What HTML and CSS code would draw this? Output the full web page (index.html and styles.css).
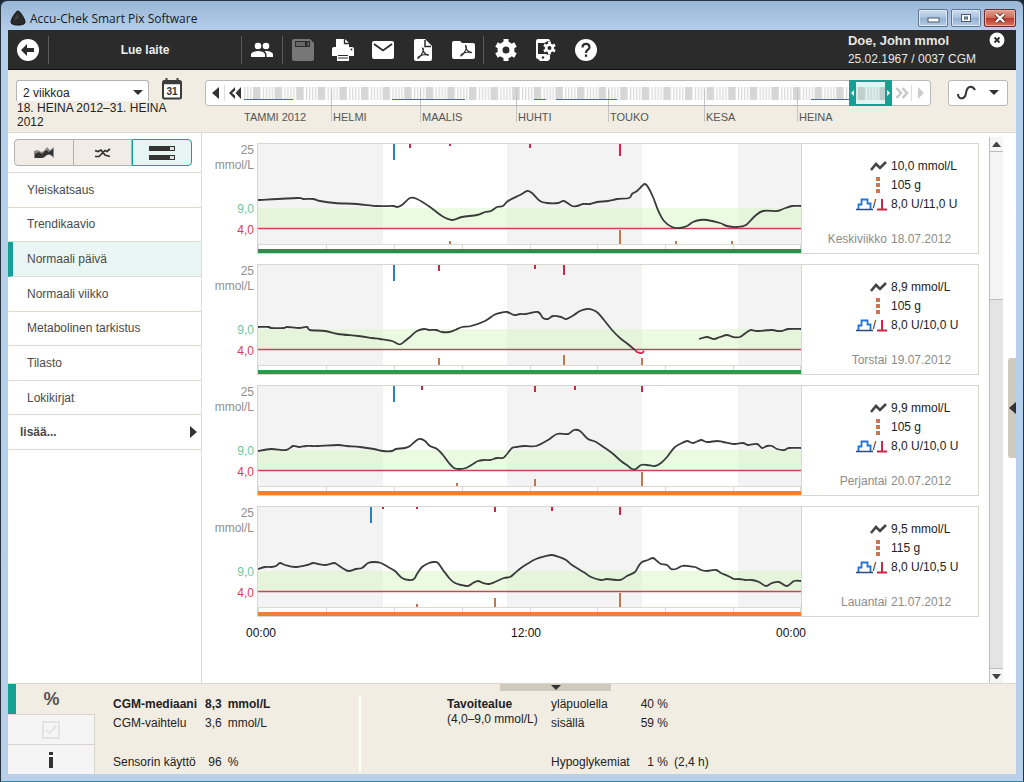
FILE: index.html
```html
<!DOCTYPE html>
<html lang="fi">
<head>
    <meta charset="UTF-8">
    <meta name="viewport" content="width=device-width, initial-scale=1.0">
    <title>Accu-Chek Smart Pix Software</title>
    <link rel="stylesheet" href="styles.css">
</head>
<body>

<div class="window">
    <header class="titlebar">
        <svg class="app-icon" width="16" height="16" viewBox="0 0 16 16"><path d="M8 1C10 1 15 9 15 12C15 14 13 15 8 15C3 15 1 14 1 12C1 9 6 1 8 1Z" fill="#2b2b2b" stroke="#111"/><path d="M7 4L4 10L9 8Z" fill="#444"/></svg>
        <h1>Accu-Chek Smart Pix Software</h1>
        <div class="window-buttons">
            <button aria-label="Pienennä"><svg width="13" height="10"><rect x="1" y="5" width="11" height="4" fill="#fff" stroke="#4b5a6e"/></svg></button>
            <button aria-label="Suurenna"><svg width="13" height="10"><rect x="1.5" y="1.5" width="9" height="7" fill="#fff" stroke="#4b5a6e"/><rect x="4.5" y="4" width="3" height="2" fill="#9db3cf" stroke="#4b5a6e"/></svg></button>
            <button class="win-close" aria-label="Sulje"><svg width="14" height="10"><path d="M3 1L11 9M11 1L3 9" stroke="#5c2a28" stroke-width="4"/><path d="M3 1L11 9M11 1L3 9" stroke="#fff" stroke-width="2.4"/></svg></button>
        </div>
    </header>

    <div class="content">
        <nav class="toolbar">
            <button class="tool" aria-label="Takaisin"><svg width="22" height="22" viewBox="0 0 22 22"><circle cx="11" cy="11" r="11" fill="#fff"/><path d="M4 11L10 5V9H17V13H10V17Z" fill="#2b2b2b"/></svg></button>
            <span class="sep"></span>
            <button class="read-device">Lue laite</button>
            <span class="sep"></span>
            <button class="tool" aria-label="Potilaat"><svg width="24" height="24" viewBox="0 0 24 24" fill="#fff"><circle cx="8" cy="8" r="3.3"/><circle cx="16" cy="8" r="3.3"/><path d="M1 19V16.5C1 14 5.500 13 8 13S15 14 15 16.500V19ZM16.500 19V16.500C16.500 15 15.800 14 14.600 13.200C18 12.700 23 14 23 16.500V19Z"/></svg></button>
            <span class="sep"></span>
            <button class="tool" aria-label="Tallenna" disabled><svg width="22" height="22" viewBox="0 0 22 22"><path d="M2 0H18L22 4V20Q22 22 20 22H2Q0 22 0 20V2Q0 0 2 0Z" fill="#777"/><path d="M3 2H18V8H3Z" fill="#2b2b2b"/><path d="M4 3H13V7H4ZM15.500 3H17V7H15.500Z" fill="#666"/></svg></button>
            <button class="tool" aria-label="Tulosta"><svg width="24" height="24" viewBox="0 0 24 24"><path d="M5 1H14L18 5V9H21Q23 9 23 11V18H18V23H6V18H1V11Q1 9 3 9H5Z" fill="#fff"/><path d="M13.500 1V5.500H18" fill="none" stroke="#2b2b2b" stroke-width="1.300"/><path d="M7 17.500H17M7 20H17" stroke="#2b2b2b"/><circle cx="20.500" cy="11.500" r="1" fill="#2b2b2b"/></svg></button>
            <button class="tool" aria-label="Sähköposti"><svg width="22" height="20" viewBox="0 0 22 20"><rect y="1" width="22" height="18" rx="2" fill="#fff"/><path d="M2 4L11 10.500L20 4" fill="none" stroke="#2b2b2b" stroke-width="1.800"/></svg></button>
            <button class="tool" aria-label="PDF"><svg width="20" height="22" viewBox="0 0 20 22"><path d="M3 0H12L19 7V20Q19 22 17 22H3Q1 22 1 20V2Q1 0 3 0Z" fill="#fff"/><path d="M12 1V7.500H18" fill="none" stroke="#2b2b2b" stroke-width="1.500"/><path d="M9.500 9C12 9 9 17 5 19.500C4 18 9 15 15 15.500C17 17.500 10 15.500 9.500 9Z" fill="none" stroke="#2b2b2b" stroke-width="1.100"/></svg></button>
            <button class="tool" aria-label="PDF-kansio"><svg width="23" height="20" viewBox="0 0 23 20"><path d="M2 1H8L10 3H21Q23 3 23 5V17Q23 19 21 19H2Q0 19 0 17V3Q0 1 2 1Z" fill="#fff"/><path d="M13.500 5.500C16 6 13 13.500 9 16C8 14.500 13 11.500 19 12C21 14 14 12 13.500 5.500Z" fill="none" stroke="#2b2b2b" stroke-width="1.100"/></svg></button>
            <span class="sep wide"></span>
            <button class="tool" aria-label="Asetukset"><svg width="22" height="22" viewBox="0 0 22 22"><circle cx="11" cy="11" r="6" fill="none" stroke="#fff" stroke-width="5"/><path d="M11 0V4M11 18V22M1.500 5.500L5 7.500M17 14.500L20.500 16.500M1.500 16.500L5 14.500M17 7.500L20.500 5.500" stroke="#fff" stroke-width="5"/></svg></button>
            <button class="tool" aria-label="Laitteen asetukset"><svg width="22" height="22" viewBox="0 0 22 22"><path d="M3 0H13Q15 0 15 2V20L13 22H5L3 20Q1 20 1 18V2Q1 0 3 0Z" fill="#fff"/><path d="M3 4H13V15H3Z" fill="#2b2b2b"/><circle cx="14.500" cy="9" r="7" fill="#2b2b2b"/><circle cx="14.500" cy="9" r="3.300" fill="none" stroke="#fff" stroke-width="2.600"/><path d="M14.500 2.500V5M14.500 13V15.500M9 5.800L11 7M18 11L20 12.200M9 12.200L11 11M18 7L20 5.800" stroke="#fff" stroke-width="2.800"/><circle cx="8" cy="18.500" r="1.200" fill="#2b2b2b"/></svg></button>
            <button class="tool" aria-label="Ohje"><svg width="22" height="22" viewBox="0 0 22 22"><circle cx="11" cy="11" r="11" fill="#fff"/><path d="M7.500 8.500Q7.500 4.800 11 4.800T14.500 8.200Q14.500 9.800 12.500 11Q11 12 11 14" fill="none" stroke="#2b2b2b" stroke-width="2.200"/><rect x="9.900" y="15.500" width="2.300" height="2.300" fill="#2b2b2b"/></svg></button>
            <div class="patient">
                <strong>Doe, John mmol</strong>
                <span>25.02.1967 / 0037 CGM</span>
            </div>
            <button class="patient-close" aria-label="Sulje potilas"><svg width="16" height="16"><circle cx="8" cy="8" r="7.500" fill="#fff"/><path d="M5.500 5.500L10.500 10.500M10.500 5.500L5.500 10.500" stroke="#2b2b2b" stroke-width="1.800"/></svg></button>
        </nav>

        <section class="filterbar">
            <div class="period">
                <div class="period-row">
                    <div class="select-wrap">
                        <select aria-label="Ajanjakso"><option>2 viikkoa</option><option>4 viikkoa</option></select>
                    </div>
                    <button class="plain" aria-label="Kalenteri"><svg width="20" height="22" viewBox="0 0 20 22"><path d="M4.500 0V4M15.500 0V4" stroke="#3c3c3c" stroke-width="2"/><rect x="1" y="3" width="18" height="17.500" rx="1.500" fill="#fff" stroke="#3c3c3c" stroke-width="2"/><path d="M1 4.500H19" stroke="#3c3c3c" stroke-width="3.500"/><text x="10" y="17" class="cal-text">31</text></svg></button>
                </div>
                <div class="period-range"><p>18. HEINA 2012–31. HEINA 2012</p></div>
            </div>

            <div class="timeline">
                <div class="timeline-bar">
                    <button class="plain step" aria-label="Edellinen"><svg width="8" height="12"><path d="M8 0V12L1 6Z" fill="#333"/></svg></button>
                    <button class="plain jump" aria-label="Alkuun"><svg width="14" height="12"><path d="M7 0V3.500L4 6L7 8.500V12L1 6ZM13 0V12L7.500 6Z" fill="#333"/></svg></button>
                    <div class="strip">
                        <svg width="100%" height="24" viewBox="0 0 648 24" preserveAspectRatio="none">
                            <defs>
                                <pattern id="days" x="9" width="21.6" height="24" patternUnits="userSpaceOnUse">
                                    <rect width="7.500" height="13" y="6" fill="#d6d6d6"/>
                                    <path d="M10.500 6V19M13.500 6V19M16.500 6V19M19.500 6V19" stroke="#cfcfcf"/>
                                </pattern>
                            </defs>
                            <rect width="648" height="24" fill="url(#days)"/>
                            <path d="M87.500 8V24M176.500 8V24M272.500 8V24M364.500 8V24M460.500 8V24M553.500 8V24" stroke="#c4c4c4"/>
                            <path d="M0 18.500H49M148 18.500H221M290 18.500H302M312 18.500H373M567 18.500H605" stroke="#4a6d9c"/>
                        </svg>
                        <div class="range"><i></i><i></i></div>
                    </div>
                    <button class="plain jump" aria-label="Loppuun"><svg width="14" height="12"><path d="M1.500 1L6 6L1.500 11M7.500 1L12 6L7.500 11" fill="none" stroke="#c8c8c8" stroke-width="2.500"/></svg></button>
                    <button class="plain step last" aria-label="Seuraava"><svg width="8" height="12"><path d="M1 0V12L7 6Z" fill="#ccc"/></svg></button>
                </div>
                <div class="months">
                    <span>TAMMI 2012</span><span>HELMI</span><span>MAALIS</span><span>HUHTI</span><span>TOUKO</span><span>KESA</span><span>HEINA</span>
                </div>
            </div>

            <button class="graph-type" aria-label="Kaavion tyyppi">
                <svg width="20" height="16"><path d="M1 9C1 15 8 15 9 8S15 0 18 5" fill="none" stroke="#333" stroke-width="2"/></svg>
                <svg width="10" height="6"><path d="M0 0H10L5 5Z" fill="#333"/></svg>
            </button>
        </section>

        <main class="main">
            <aside class="sidebar">
                <div class="view-tabs">
                    <button aria-label="Trendi"><svg width="20" height="14"><path d="M0 5L4 4L7 6L10 5L13 1L16 4L20 1V12L16 9L13 9L10 12H0Z" fill="#8a8a8a"/><path d="M1 8L5 6L8 8L12 4L15 6L19 3V10L15 8L11 10L8 12H1Z" fill="#333"/></svg></button>
                    <button aria-label="Käyrä"><svg width="16" height="12"><path d="M0 9.500H4L10 3.500L12 4.500L15 2M0 3.500L3 4.500L6 3L10 8L15 9.500" fill="none" stroke="#333" stroke-width="1.700"/></svg></button>
                    <button class="active" aria-label="Päivät"><svg width="26" height="14"><rect y="0" width="26" height="5" fill="#333"/><rect y="9" width="26" height="5" fill="#333"/><path d="M21 1H25V4H21ZM21 10H25V13H21Z" fill="#ddd"/></svg></button>
                </div>
                <nav class="menu">
                    <a href="#">Yleiskatsaus</a>
                    <a href="#">Trendikaavio</a>
                    <a href="#" class="active">Normaali päivä</a>
                    <a href="#">Normaali viikko</a>
                    <a href="#">Metabolinen tarkistus</a>
                    <a href="#">Tilasto</a>
                    <a href="#">Lokikirjat</a>
                    <a href="#" class="more">lisää... <svg width="7" height="12"><path d="M0 0V12L7 6Z" fill="#333"/></svg></a>
                </nav>
            </aside>

            <section class="days">
                <div id="dayList"></div>
                <div class="hours"><span>00:00</span><span>12:00</span><span>00:00</span></div>
            </section>

            <div class="scrollbar">
                <button aria-label="Ylös"><svg width="9" height="5"><path d="M0 5H9L5 0H4Z" fill="#444"/></svg></button>
                <div class="thumb"></div>
                <div class="track"></div>
                <button aria-label="Alas"><svg width="9" height="5"><path d="M0 0H9L5 5H4Z" fill="#444"/></svg></button>
            </div>
            <button class="side-handle" aria-label="Avaa paneeli"><svg width="7" height="12"><path d="M7 0V12L0 6Z" fill="#333"/></svg></button>
        </main>

        <footer class="footer">
            <div class="footer-tabs">
                <button class="active">%</button>
                <button aria-label="Valinnat" disabled><svg width="18" height="18"><rect x="1" y="1" width="16" height="16" fill="none" stroke="#e3e3e3" stroke-width="2"/><path d="M4 9L8 12L14 5" fill="none" stroke="#e3e3e3" stroke-width="2"/></svg></button>
                <button aria-label="Tiedot"><svg width="6" height="16"><rect x="1" width="4" height="3" fill="#333"/><rect x="1" y="5" width="4" height="11" fill="#333"/></svg></button>
            </div>
            <table class="stats cgm">
                <tr class="bold"><th>CGM-mediaani</th><td class="num">8,3</td><td>mmol/L</td></tr>
                <tr><th>CGM-vaihtelu</th><td class="num">3,6</td><td>mmol/L</td></tr>
                <tr class="last"><th>Sensorin käyttö</th><td class="num">96</td><td>%</td></tr>
            </table>
            <div class="target"><strong>Tavoitealue</strong><span>(4,0–9,0 mmol/L)</span></div>
            <table class="stats">
                <tr><th>yläpuolella</th><td class="num">40 %</td><td></td></tr>
                <tr><th>sisällä</th><td class="num">59 %</td><td></td></tr>
                <tr class="last"><th>Hypoglykemiat</th><td class="num">1 %</td><td>(2,4 h)</td></tr>
            </table>
            <button class="footer-handle" aria-label="Piilota paneeli"><svg width="10" height="5"><path d="M0 0H10L5 5Z" fill="#333"/></svg></button>
        </footer>
    </div>
</div>

<script>
    // basal, bolus and meals are [x, height] marks; curves are lists of x,y points
    const days = [
        {
            name: 'Keskiviikko', date: '18.07.2012', mean: '10,0', carbs: '105', insulin: '8,0 U/11,0 U', status: '#2a8f4c',
            basal: [[136, 16]],
            bolus: [[152, 4], [192, 2], [272, 4], [362, 12]],
            meals: [[192, 3], [362, 14], [418, 3], [474, 3]],
            curves: ['0,56 39,54 45,55 55,55 62,57 77,59 99,60 119,62 135,62 139,63 144,61 152,54 159,55 172,63 184,72 194,76 204,73 219,71 227,68 233,67 239,63 245,62 250,57 262,51 269,47 274,49 282,57 289,59 300,59 306,57 314,62 319,62 325,60 332,60 339,58 350,57 359,55 371,54 374,50 379,47 384,42 387,40 390,43 395,53 400,66 406,77 414,83 422,84 429,82 435,78 442,76 449,76 462,79 469,82 479,83 488,81 497,72 505,67 519,67 525,65 534,62 543,62']
        },
        {
            name: 'Torstai', date: '19.07.2012', mean: '8,9', carbs: '105', insulin: '8,0 U/10,0 U', status: '#2a9a4c',
            basal: [[136, 16]],
            bolus: [[181, 6], [277, 4], [306, 10]],
            meals: [[181, 7], [306, 10], [384, 7]],
            curves: ['0,62 11,62 13,63 26,63 29,62 41,63 49,62 52,65 67,66 80,69 100,71 114,73 122,74 134,76 140,79 143,79 147,76 152,72 159,66 166,64 171,65 178,65 184,67 191,67 197,65 204,62 213,61 227,56 236,50 242,48 249,47 256,50 262,49 268,49 280,47 285,53 290,54 295,51 303,52 308,54 316,50 322,46 329,44 335,45 340,48 346,55 354,65 362,73 371,80 377,85',
                '441,74 449,72 456,74 462,72 469,70 475,72 482,72 489,67 493,65 499,66 514,65 519,66 524,66 530,64 543,64'],
            low: '377,85 379,87 382,88 384,88 386,86'
        },
        {
            name: 'Perjantai', date: '20.07.2012', mean: '9,9', carbs: '105', insulin: '8,0 U/10,0 U', status: '#f08030',
            basal: [[136, 16]],
            bolus: [[164, 4], [277, 6], [317, 4], [384, 6]],
            meals: [[199, 3], [277, 7], [384, 14]],
            curves: ['0,65 13,63 28,64 35,60 41,61 48,60 54,60 60,60 80,59 89,60 102,61 116,63 125,65 134,65 138,63 147,62 152,60 159,54 163,53 167,55 172,60 179,63 185,69 191,77 196,82 201,83 208,82 215,78 220,75 226,74 232,74 239,72 245,72 249,68 254,62 259,61 266,60 278,60 290,54 299,48 310,48 316,44 322,45 330,53 338,56 347,62 354,67 363,75 370,80 374,83 378,83 383,79 389,79 397,80 403,77 409,71 416,62 422,58 429,55 435,57 443,54 449,56 459,55 465,56 476,58 485,57 490,59 499,58 504,62 509,60 514,60 519,63 526,64 531,62 543,62']
        },
        {
            name: 'Lauantai', date: '21.07.2012', mean: '9,5', carbs: '115', insulin: '8,0 U/10,5 U', status: '#f08030',
            basal: [[113, 16]],
            bolus: [[125, 2], [159, 2], [237, 5], [294, 4], [362, 8]],
            meals: [[159, 3], [237, 9], [362, 14]],
            curves: ['0,62 7,60 13,60 18,59 22,56 27,58 37,60 49,58 55,56 60,57 68,58 76,56 80,58 86,62 91,64 98,62 104,61 110,56 116,55 123,56 130,60 137,64 144,71 151,73 156,72 159,67 164,60 171,56 176,55 180,56 185,63 192,72 197,76 203,78 210,79 215,76 220,74 225,76 231,77 237,75 246,71 252,70 257,66 263,61 269,57 278,52 288,49 294,48 301,50 308,53 314,58 322,63 327,66 333,70 343,73 349,72 362,73 369,69 377,65 380,60 384,55 390,53 395,51 399,54 403,57 409,58 413,62 418,62 424,59 430,59 437,60 443,63 449,64 458,63 463,66 470,69 476,72 481,72 487,73 494,73 501,75 508,79 514,76 521,75 529,79 536,74 543,74']
        }
    ];

    const topMark = color => ([x, h]) => `<rect x="${x - 1}" y="0" width="2" height="${h}" fill="${color}"/>`;
    const mealMark = ([x, h]) => `<rect x="${x - 1}" y="${100 - h}" width="2" height="${h}" fill="#c07850"/>`;

    // Catmull-Rom spline through the points
    function smooth(points) {
        const p = points.split(' ').map(s => s.split(',').map(Number));
        let d = `M${p[0]}`;
        for (let i = 0; i < p.length - 1; i++) {
            const [a, b, c, e] = [p[i - 1] || p[i], p[i], p[i + 1], p[i + 2] || p[i + 1]];
            d += `C${b[0] + (c[0] - a[0]) / 6},${b[1] + (c[1] - a[1]) / 6} ${c[0] - (e[0] - b[0]) / 6},${c[1] - (e[1] - b[1]) / 6} ${c}`;
        }
        return d;
    }

    function chart(day) {
        return `<svg class="chart" viewBox="0 0 543 109" preserveAspectRatio="none">
            <path d="M0 0H125V100H0ZM249 0H384V100H249ZM480 0H543V100H480Z" fill="#f3f3f3"/>
            <rect y="64" width="543" height="20" fill="#d8f8c4" fill-opacity=".5"/>
            <path d="M0 100.5H543" stroke="#e0d8cc"/>
            <path d="M.5 101V105M68.5 101V105M136.5 101V105M204.5 101V105M272.5 101V105M339.5 101V105M407.5 101V105M475.5 101V105M542.5 101V105" stroke="#d8d8d8"/>
            <rect y="105" width="543" height="4" fill="${day.status}"/>
            ${day.basal.map(topMark('#2a7fc8')).join('')}
            ${day.bolus.map(topMark('#cf2549')).join('')}
            ${day.meals.map(mealMark).join('')}
            <path d="M0 84.5H543" stroke="#d0405e" stroke-width="1.3"/>
            ${day.curves.map(c => `<path class="curve" d="${smooth(c)}"/>`).join('')}
            ${day.low ? `<path class="curve low" d="${smooth(day.low)}"/>` : ''}
        </svg>`;
    }

    document.getElementById('dayList').innerHTML = days.map(day => `
        <article class="day">
            <div class="scale"><span>25<br>mmol/L</span><span class="high">9,0</span><span class="low">4,0</span></div>
            <div class="card">
                ${chart(day)}
                <div class="info">
                    <span><svg width="17" height="12"><path d="M1 10L6 4L10 8L16 2" fill="none" stroke="#444" stroke-width="2.6"/></svg></span><span>${day.mean} mmol/L</span>
                    <span class="meal"><svg width="4" height="16"><path d="M0 0H4V4H0ZM0 6H4V10H0ZM0 12H4V16H0Z" fill="#c87850"/></svg></span><span>${day.carbs} g</span>
                    <span><svg width="17" height="14"><path d="M2.500 12V7.500H5.500V2.500H11.500V6.500H14.500V12" fill="none" stroke="#1f74d8" stroke-width="1.800"/><path d="M0 12.500H17" stroke="#2c4a78" stroke-width="1.500"/></svg>/<svg class="bolus" width="10" height="14"><path d="M5 2V12M0 12.500H10" stroke="#cf2549" stroke-width="2"/></svg></span><span>${day.insulin}</span>
                    <span class="date">${day.name}</span><span class="date">${day.date}</span>
                </div>
            </div>
        </article>`).join('');
</script>

</body>
</html>
```
FILE: styles.css
```css
* {
    box-sizing: border-box;
}
body {
    margin: 0;
    font-family: "Liberation Sans", Arial, sans-serif;
    font-size: 12px;
    color: #222;
    background: #1b2a38;
}
button, select {
    font: inherit;
    color: inherit;
}
button {
    display: flex;
    align-items: center;
    justify-content: center;
    margin: 0;
    padding: 0;
    border: none;
    background: none;
    cursor: pointer;
}
svg {
    display: block;
    flex-shrink: 0;
}

/* Window frame */
.window {
    display: flex;
    flex-direction: column;
    min-height: 100vh;
    padding: 0 7px 7px;
    border: 1px solid #27323f;
    border-bottom-color: #1c90a8;
    border-radius: 7px 7px 0 0;
    background: linear-gradient(#9ab6d6, #b3cfeb 30px, #b9d0ea);
}
.titlebar {
    display: flex;
    align-items: center;
    height: 29px;
    padding: 5px 0 0 2px;
}
.titlebar h1 {
    flex: 1;
    margin: 0 0 0 4px;
    font: 12px "Open Sans", "Noto Sans", sans-serif;
    color: #151c26;
}
.window-buttons {
    display: flex;
    gap: 3px;
}
.window-buttons button {
    width: 30px;
    height: 18px;
    border: 1px solid #5f7590;
    border-radius: 2px;
    background: linear-gradient(#cfdff0, #a6c0dd 50%, #93b0d0 50%, #b4cce6);
    box-shadow: inset 0 0 0 1px #dce9f6;
}
.window-buttons .win-close {
    width: 32px;
    border-color: #6b2a2c;
    background: linear-gradient(#e3a18f, #cf6a57 50%, #b8372a 50%, #d5755e);
    box-shadow: inset 0 0 0 1px #e8b0a2;
}
.content {
    display: flex;
    flex: 1;
    flex-direction: column;
    background: #fff;
}

/* Toolbar */
.toolbar {
    display: flex;
    align-items: center;
    height: 40px;
    border-bottom: 1px solid #111;
    background: #2b2b2b;
    color: #fff;
}
.tool {
    width: 40px;
    height: 38px;
}
.sep {
    width: 1px;
    height: 28px;
    background: #5a5a5a;
}
.sep.wide {
    margin-right: 2px;
}
.read-device {
    width: 192px;
    font-weight: bold;
    color: #eee;
}
.patient {
    display: flex;
    flex-direction: column;
    margin-left: auto;
    color: #e6e6e6;
    line-height: 18px;
}
.patient strong {
    font-size: 13px;
}
.patient-close {
    align-self: flex-start;
    margin: 2px 11px 0 13px;
}

/* Period and timeline */
.filterbar {
    display: flex;
    align-items: flex-start;
    height: 63px;
    padding: 10px 8px 0;
    border-bottom: 1px solid #dfdacf;
    background: #f2ede3;
}
.plain {
    flex-shrink: 0;
}
.period {
    width: 189px;
}
.period-row {
    display: flex;
    align-items: flex-start;
    gap: 13px;
    height: 21px;
}
.period-row .plain {
    margin-top: -2px;
}
.select-wrap {
    position: relative;
    width: 133px;
}
.select-wrap::after {
    content: "";
    position: absolute;
    top: 10px;
    right: 6px;
    border: 5px solid transparent;
    border-top-color: #333;
    pointer-events: none;
}
.select-wrap select {
    width: 100%;
    height: 21px;
    padding: 4px 6px 0;
    border: 1px solid #b5b5b5;
    border-bottom: none;
    border-radius: 3px 3px 0 0;
    background: #fff;
    appearance: none;
}
.cal-text {
    font-size: 10px;
    font-weight: bold;
    text-anchor: middle;
    fill: #333;
}
.period-range {
    height: 23px;
    margin-top: 2px;
    overflow: hidden;
    line-height: 14px;
}
.period-range p {
    width: 160px;
    margin: -2px 0 0 1px;
}
.timeline {
    flex: 1;
}
.timeline-bar {
    display: flex;
    align-items: center;
    height: 26px;
    border: 1px solid #b9b9b9;
    border-radius: 3px;
    background: #fff;
}
.step {
    width: 19px;
    height: 16px;
    border-right: 1px solid #ddd;
}
.step.last {
    border-right: none;
    border-left: 1px solid #ddd;
}
.jump {
    width: 19px;
}
.strip {
    position: relative;
    flex: 1;
}
.range {
    position: absolute;
    top: -1px;
    right: 0;
    display: flex;
    align-items: center;
    justify-content: space-between;
    width: 43px;
    height: 26px;
    border: 2px solid #14a095;
    border-width: 2px 7px;
    background: rgba(20, 160, 149, 0.12);
}
.range i {
    margin-left: -5px;
    border: 3px solid transparent;
    border-right: 3px solid #fff;
    border-left: none;
}
.range i + i {
    margin: 0 -5px 0 0;
    border-right: none;
    border-left: 3px solid #fff;
}
.months {
    display: grid;
    grid-template-columns: 87fr 89fr 96fr 92fr 96fr 93fr 95fr;
    margin: 0 39px;
    line-height: 16px;
    font-size: 11px;
    color: #555;
}
.months span {
    height: 16px;
    padding: 3px 0 0 1px;
    border-left: 1px solid #c4c4c4;
    white-space: nowrap;
}
.months span:first-child {
    border-left: none;
    padding-left: 0;
}
.graph-type {
    gap: 12px;
    width: 60px;
    height: 26px;
    margin-left: 17px;
    border: 1px solid #b9b9b9;
    border-radius: 3px;
    background: #fff;
}

/* Sidebar */
.main {
    position: relative;
    display: flex;
    flex: 1;
}
.sidebar {
    width: 194px;
    border-right: 1px solid #dcdcdc;
}
.view-tabs {
    display: flex;
    padding: 6px 9px 6px 6px;
}
.view-tabs button {
    flex: 1;
    height: 27px;
    border: 1px solid #b3b0ab;
    border-left-width: 0;
    background: #f1ece8;
}
.view-tabs button:first-child {
    border-left-width: 1px;
    border-radius: 4px 0 0 4px;
}
.view-tabs .active {
    border: 1px solid #14a095;
    border-radius: 0 4px 4px 0;
    background: #e6f5f3;
}
.menu {
    display: grid;
    grid-auto-rows: 1fr;
    min-height: 278px;
    border-top: 1px solid #dfdacf;
}
.menu a {
    display: flex;
    align-items: center;
    justify-content: space-between;
    padding: 0 4px 0 19px;
    border-bottom: 1px solid #dfdacf;
    color: #4a4a4a;
    text-decoration: none;
}
.menu .active {
    padding-left: 14px;
    border-left: 5px solid #14a095;
    background: #eaf6f4;
}
.menu .more {
    padding-left: 12px;
    font-weight: bold;
}

/* Day charts */
.days {
    flex: 1;
    min-width: 0;
    padding-top: 10px;
}
#dayList {
    display: grid;
    gap: 10px;
}
.day {
    display: flex;
}
.scale {
    width: 55px;
    padding-right: 3px;
    text-align: right;
    line-height: 15px;
    color: #909090;
}
.scale span {
    display: block;
}
.scale .high {
    margin-top: 29px;
    color: #6ec79c;
}
.scale .low {
    margin-top: 6px;
    color: #d83a5a;
}
.card {
    display: flex;
    flex: 1;
    min-width: 0;
    border: 1px solid #d9d6d0;
}
.chart {
    flex: 1;
    min-width: 0;
    height: 109px;
}
.curve {
    fill: none;
    stroke: #3a3a3a;
    stroke-width: 1.8;
    stroke-linejoin: round;
    vector-effect: non-scaling-stroke;
}
.curve.low {
    stroke: #e01f4c;
}
.info {
    display: grid;
    grid-template-columns: 1fr 87px;
    grid-auto-rows: 19px;
    align-items: center;
    column-gap: 4px;
    width: 177px;
    padding-top: 12px;
    border-left: 1px solid #d9d6d0;
}
.info > :nth-child(odd) {
    display: flex;
    align-items: center;
    justify-content: flex-end;
}
.info .meal {
    padding-right: 7px;
}
.info .bolus {
    margin-left: 1px;
}
.info .date {
    margin-top: 32px;
    color: #8c8c8c;
}
.hours {
    display: flex;
    justify-content: space-between;
    padding: 9px 173px 0 44px;
    color: #111;
}

/* Scrollbar and side panel handle */
.scrollbar {
    display: flex;
    flex-direction: column;
    width: 14px;
    margin: 4px 13px 0 10px;
    border-left: 1px solid #bdbdbd;
    background: #f5f5f5;
}
.scrollbar button {
    height: 15px;
    border-bottom: 1px solid #bdbdbd;
}
.scrollbar button:last-child {
    border-top: 1px solid #bdbdbd;
    border-bottom: none;
}
.thumb {
    flex: 149;
}
.track {
    flex: 374;
    border-top: 1px solid #bdbdbd;
    background: #e4e4e4;
}
.side-handle {
    position: absolute;
    top: 225px;
    right: 0;
    width: 8px;
    height: 100px;
    border-radius: 3px 0 0 3px;
    background: #cfc9be;
}

/* Footer */
.footer {
    position: relative;
    display: flex;
    border-top: 1px solid #dcd7cb;
    background: #f2ede3;
}
.footer-tabs {
    width: 87px;
}
.footer-tabs button {
    width: 100%;
    height: 30px;
    border: 1px solid #d8d5ce;
    border-width: 1px 1px 0 0;
    background: #f5f5f5;
}
.footer-tabs .active {
    padding-right: 8px;
    border: none;
    border-left: 8px solid #14a095;
    background: none;
    font-size: 18px;
    font-weight: bold;
    color: #555;
}
.stats {
    align-self: flex-start;
    margin-top: 11px;
    border-collapse: collapse;
    line-height: 19px;
    white-space: nowrap;
}
.stats th {
    padding: 0;
    font-weight: normal;
    text-align: left;
}
.stats td {
    padding: 0 0 0 6px;
}
.stats .num {
    padding-left: 8px;
    text-align: right;
}
.stats .bold, .stats .bold th {
    font-weight: bold;
}
.stats .last th, .stats .last td {
    padding-top: 20px;
}
.cgm {
    width: 248px;
    margin-left: 18px;
    border-right: 2px solid #fff;
}
.cgm td:last-child {
    width: 100%;
}
.target {
    display: flex;
    flex-direction: column;
    width: 104px;
    margin: 13px 0 0 86px;
    line-height: 15px;
    white-space: nowrap;
}
.target + .stats th {
    width: 81px;
}
.target + .stats .num {
    width: 36px;
}
.footer-handle {
    position: absolute;
    top: 0;
    left: 492px;
    width: 111px;
    height: 7px;
    background: #cfc9be;
}
```
